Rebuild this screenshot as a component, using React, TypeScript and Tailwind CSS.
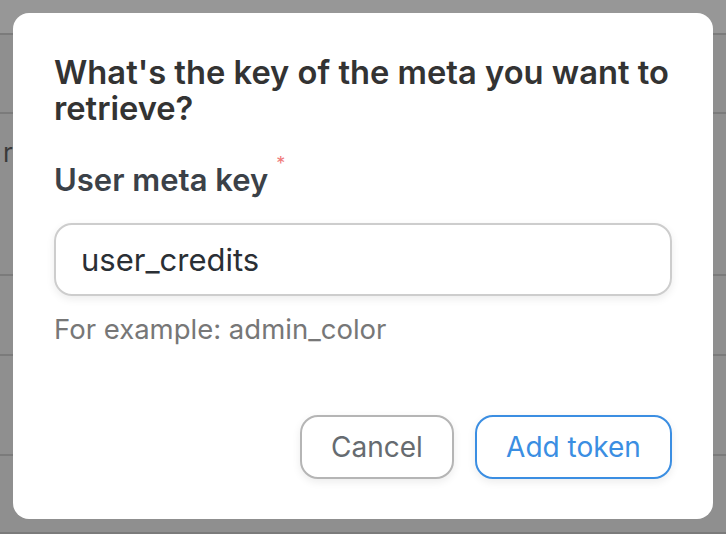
import React from "react";

const rows = [
  { h: "h-[35px]", bg: "bg-[#979797]" },
  { h: "h-[79px]", bg: "bg-[#8f8f8f]" },
  { h: "h-[162px]", bg: "bg-[#8f8f8f]", text: "r" },
  { h: "h-[80px]", bg: "bg-[#8f8f8f]" },
  { h: "h-[100px]", bg: "bg-[#8f8f8f]" },
  { h: "h-[78px]", bg: "bg-[#8f8f8f]" },
];

export default function App() {
  return (
    <div
      className="relative h-[534px] w-[726px] overflow-hidden bg-[#7b7b7b]"
      style={{ fontFamily: "Inter, 'Noto Sans', sans-serif" }}
    >
      {/* page behind the overlay */}
      <div className="flex flex-col">
        {rows.map((r, i) => (
          <div key={i} className={`${r.h} ${r.bg} border-b-2 border-[#7b7b7b]`}>
            {r.text && (
              <div className="ml-[3px] mt-[24px] text-[26px] leading-[30px] text-[#3a3a3a]">{r.text}</div>
            )}
          </div>
        ))}
      </div>

      {/* dialog */}
      <div className="absolute left-[13px] top-[13px] flex h-[506px] w-[700px] flex-col rounded-[16px] bg-white px-[41px] pb-[40px] pt-[41px]">
        <h2 className="text-[32.7px] font-semibold leading-[36px] text-[#333333]">
          What's the key of the meta you want to retrieve?
        </h2>

        <label className="mt-[36px] flex items-start text-[31px] font-semibold leading-[36px] text-[#3b4148]">
          User meta key
          <span className="ml-[8px] mt-[-7px] text-[18px] font-normal leading-none text-[#f07a7a]">*</span>
        </label>

        <input
          className="mt-[25px] h-[73px] w-full rounded-[18px] border-2 border-[#cdcdcd] px-[25px] text-[31px] text-[#2a2f35] shadow-[0_3px_8px_rgba(0,0,0,0.08)] outline-none"
          defaultValue="user_credits"
        />

        <p className="mt-[17px] text-[27.5px] leading-[32px] text-[#777777]">For example: admin_color</p>

        <div className="mt-auto flex justify-end gap-[21px]">
          <button className="h-[64px] w-[154px] rounded-[18px] border-2 border-[#b5b5b5] bg-white text-[28px] text-[#666b70] shadow-[0_3px_8px_rgba(0,0,0,0.08)]">
            Cancel
          </button>
          <button className="h-[64px] w-[197px] rounded-[18px] border-2 border-[#3b8ee2] bg-white text-[28px] text-[#3b8ee2] shadow-[0_3px_8px_rgba(0,0,0,0.08)]">
            Add token
          </button>
        </div>
      </div>
    </div>
  );
}
